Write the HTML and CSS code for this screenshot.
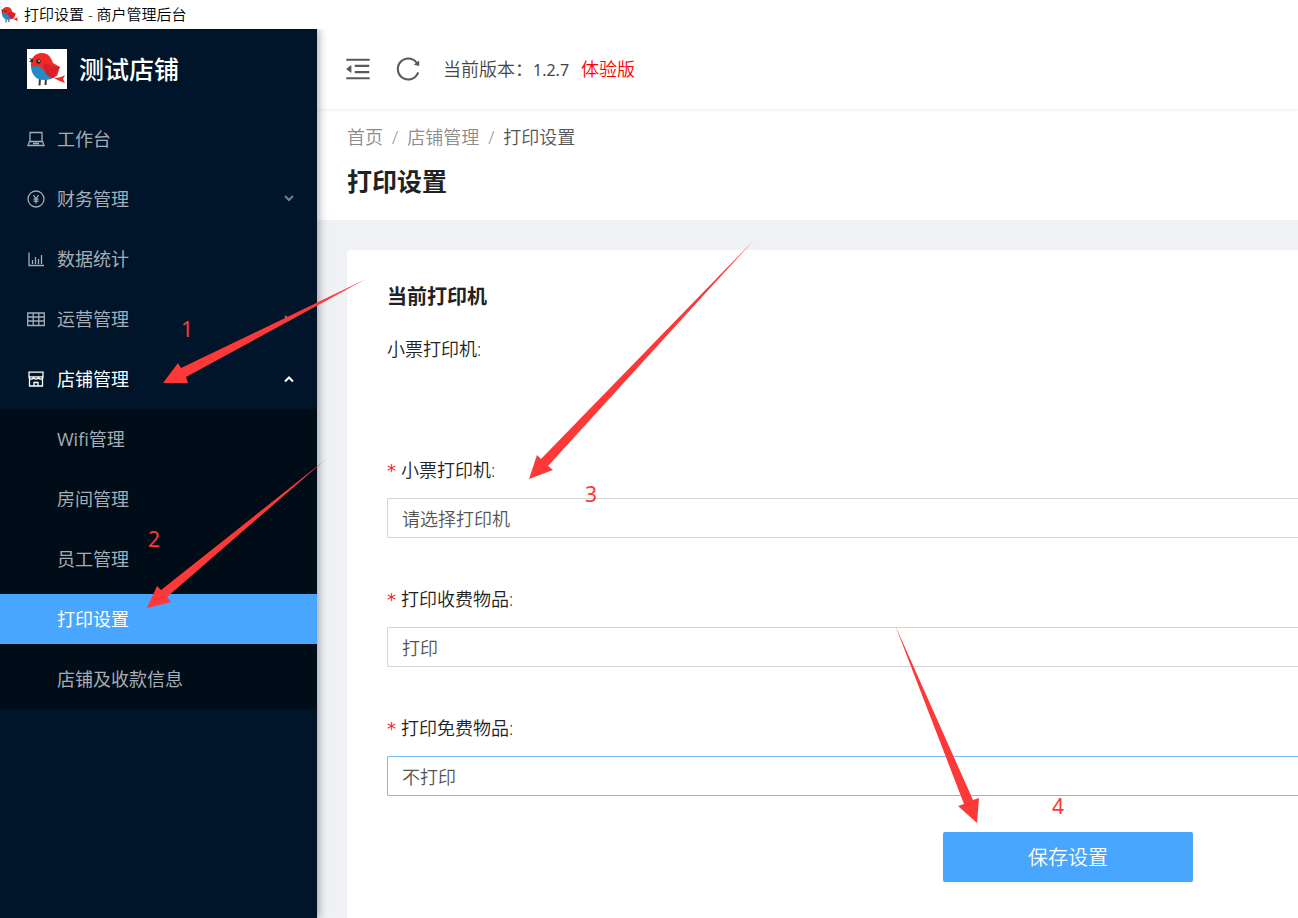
FILE: index.html
```html
<!DOCTYPE html>
<html lang="zh-CN">
<head>
<meta charset="utf-8">
<title>打印设置 - 商户管理后台</title>
<link rel="stylesheet" href="styles.css">
</head>
<body>
<svg class="defs" width="0" height="0" aria-hidden="true">
  <symbol id="bird" viewBox="0 0 40 40">
    <path d="M13 29l-.5 7.500M19 29l-.5 7" stroke="#3a3a3c" stroke-width="2" fill="none"/>
    <path d="M4 17C4 25 9 31 16 31c5 0 10-1 13-4L14 14z" fill="#258bc7"/>
    <path d="M4 18C3 9 8 4 15 4c6 0 9 4 11 10l7 4-3 9-5 1c-4-1-5-5-8-7-4-4-9-5-13-3z" fill="#f02b27"/>
    <path d="M16 15c4-1 6 1 9 2 3 1 5 1 8 1-2 3-4 4-4 7l-2 4c-6 0-11-6-11-14z" fill="#d91f2b"/>
    <path d="M27 29c4 0 8-1 11-3l-2 4 2 4c-4-1-7-3-11-5z" fill="#ed2b2a"/>
    <circle cx="11.500" cy="12.500" r="2.200" fill="#222"/><circle cx="12" cy="12" r="1" fill="#c9b9b5"/>
    <path d="M2 9l4 1v3l-4 0 2-2z" fill="#333"/>
  </symbol>
</svg>

<header class="titlebar">
  <svg class="favicon" aria-hidden="true"><use href="#bird"/></svg>
  <span>打印设置 - 商户管理后台</span>
</header>

<div class="layout">
  <aside class="sider">
    <div class="brand">
      <svg class="logo" aria-hidden="true"><use href="#bird"/></svg>
      <span>测试店铺</span>
    </div>
    <nav>
      <ul class="menu">
        <li><a class="item" href="#desk">
          <svg class="icon" viewBox="0 0 18 18"><path d="M3 11.500V2.500h12v9M1 15.500h16l-1.500-4h-13zM6 13.500h6"/></svg>
          <span>工作台</span></a></li>
        <li><a class="item" href="#finance">
          <svg class="icon" viewBox="0 0 18 18"><circle cx="9" cy="9" r="8"/><path d="M6.500 5L9 9l2.500-4M9 9v4.500M6.500 9.200h5M6.500 11.200h5"/></svg>
          <span>财务管理</span>
          <svg class="chevron" viewBox="0 0 12 12"><path d="M2 3l4 4 4-4"/></svg></a></li>
        <li><a class="item" href="#stats">
          <svg class="icon" viewBox="0 0 18 18"><path d="M2 2.500v13h15M5.500 10v4M8.500 7v7M11.500 9v5M14.500 5v9"/></svg>
          <span>数据统计</span></a></li>
        <li><a class="item" href="#operations">
          <svg class="icon" viewBox="0 0 18 18"><path d="M.7 3h16.600v12.500H.7zM.7 7h16.600M.7 11h16.600M6.200 3v12.500M11.800 3v12.500"/></svg>
          <span>运营管理</span>
          <svg class="chevron" viewBox="0 0 12 12"><path d="M2 3l4 4 4-4"/></svg></a></li>
        <li><a class="item open" href="#shop">
          <svg class="icon" viewBox="0 0 18 18"><path d="M2 2.200h14v4.600H2zM2.500 8v8h13V8M2 6.800c0 3 4.600 3 4.600 0 0 3 4.800 3 4.800 0 0 3 4.600 3 4.600 0M7 16v-3.500h4V16"/></svg>
          <span>店铺管理</span>
          <svg class="chevron" viewBox="0 0 12 12"><path d="M2 8.500l4-4 4 4"/></svg></a>
          <ul class="submenu">
            <li><a class="item" href="#wifi">Wifi管理</a></li>
            <li><a class="item" href="#rooms">房间管理</a></li>
            <li><a class="item" href="#staff">员工管理</a></li>
            <li><a class="item selected" href="#print" aria-current="page">打印设置</a></li>
            <li><a class="item" href="#payment">店铺及收款信息</a></li>
          </ul></li>
      </ul>
    </nav>
  </aside>

  <div class="main">
    <div class="topbar">
      <button class="tool" type="button" aria-label="收起菜单">
        <svg class="fold" viewBox="0 0 1024 1024"><path d="M408 442h480c4.400 0 8-3.600 8-8v-56c0-4.400-3.600-8-8-8H408c-4.400 0-8 3.600-8 8v56c0 4.400 3.600 8 8 8zm-8 204c0 4.400 3.600 8 8 8h480c4.400 0 8-3.600 8-8v-56c0-4.400-3.600-8-8-8H408c-4.400 0-8 3.600-8 8v56zm504-486H120c-4.400 0-8 3.600-8 8v56c0 4.400 3.600 8 8 8h784c4.400 0 8-3.600 8-8v-56c0-4.400-3.600-8-8-8zm0 632H120c-4.400 0-8 3.600-8 8v56c0 4.400 3.600 8 8 8h784c4.400 0 8-3.600 8-8v-56c0-4.400-3.600-8-8-8zM115.400 518.900L271.700 642c5.800 4.600 14.400.5 14.400-6.900V388.900c0-7.400-8.500-11.500-14.400-6.900L115.400 505.100a8.740 8.740 0 0 0 0 13.800z"/></svg>
      </button>
      <button class="tool" type="button" aria-label="刷新">
        <svg class="reload" viewBox="0 0 1024 1024"><path d="M909.100 209.300l-56.400 44.100C775.800 155.100 656.200 92 521.900 92 290 92 102.300 279.500 102 511.500 101.700 743.700 289.800 932 521.900 932c181.300 0 335.800-115 394.600-276.100 1.500-4.200-.7-8.900-4.900-10.300l-56.700-19.500a8 8 0 0 0-10.100 4.800c-1.800 5-3.800 10-5.900 14.900-17.300 41-42.100 77.800-73.700 109.400A344.770 344.770 0 0 1 655.900 829c-42.300 17.900-87.400 27-133.800 27-46.500 0-91.500-9.100-133.800-27A341.500 341.500 0 0 1 279 755.200a342.160 342.160 0 0 1-73.700-109.400c-17.900-42.400-27-87.400-27-133.900s9.100-91.500 27-133.900c17.300-41 42.100-77.800 73.700-109.400 31.600-31.600 68.400-56.400 109.300-73.800 42.300-17.900 87.400-27 133.800-27 46.500 0 91.500 9.100 133.800 27a341.500 341.500 0 0 1 109.300 73.800c9.900 9.900 19.200 20.400 27.800 31.400l-60.200 47a8 8 0 0 0 3 14.100l175.600 43c5 1.200 9.900-2.600 9.900-7.700l.8-180.900c-.1-6.600-7.800-10.300-13-6.200z"/></svg>
      </button>
      <span class="version">当前版本：<span class="number">1.2.7</span></span>
      <span class="trial">体验版</span>
    </div>

    <div class="pagehead">
      <nav class="crumbs" aria-label="面包屑">
        <a href="#home">首页</a><span>/</span><a href="#shop">店铺管理</a><span>/</span><span class="current">打印设置</span>
      </nav>
      <h1>打印设置</h1>
    </div>

    <main class="content">
      <section class="card">
        <h2>当前打印机</h2>
        <p class="printer">小票打印机:</p>
        <form class="form">
          <div class="field">
            <label for="printer">小票打印机:</label>
            <select id="printer"><option>请选择打印机</option></select>
          </div>
          <div class="field">
            <label for="paid">打印收费物品:</label>
            <select id="paid"><option>打印</option><option>不打印</option></select>
          </div>
          <div class="field">
            <label for="free">打印免费物品:</label>
            <select id="free" class="active"><option>不打印</option><option>打印</option></select>
          </div>
          <div class="actions"><button class="save" type="button">保存设置</button></div>
        </form>
      </section>
    </main>
  </div>
</div>

<svg class="notes" width="1298" height="918" viewBox="0 0 1298 918">
  <path d="M163 383l15-20 3 5L366 279 186 377l2 6z"/>
  <path d="M147 608l10-22 4 4L325 460 167 597l4 5z"/>
  <path d="M529 479l8-24 4 4L753 241 548 466l5 4z"/>
  <path d="M977 823l-19-17 6-2L895 625 973 800l6-2z"/>
  <text x="181" y="337">1</text>
  <text x="148" y="547">2</text>
  <text x="585" y="502">3</text>
  <text x="1052" y="814">4</text>
</svg>
</body>
</html>
```

FILE: styles.css
```css
* { box-sizing: border-box; }

body {
  margin: 0;
  min-height: 100vh;
  display: flex;
  flex-direction: column;
  position: relative;
  background: #fff;
  color: #222;
  font: 350 18px/24px "Open Sans", "Noto Sans CJK SC", sans-serif;
}

.defs { position: absolute; }
ul { list-style: none; margin: 0; padding: 0; }
a { color: inherit; text-decoration: none; }
h1, h2, p { margin: 0; }
button, select { font: inherit; }

.titlebar {
  display: flex;
  align-items: center;
  gap: 5px;
  height: 29px;
  padding-bottom: 1px;
  font-size: 15px;
  color: #000;
}
.favicon { width: 19px; height: 19px; }

.layout { display: flex; flex: 1; }

.sider {
  flex: none;
  width: 317px;
  background: #001529;
  color: #a6adb4;
  box-shadow: 2px 0 8px rgba(0, 21, 41, .35);
  clip-path: inset(0 -12px 0 0);
  z-index: 1;
}
.brand {
  display: flex;
  align-items: center;
  gap: 12px;
  height: 80px;
  padding-left: 27px;
  color: #fff;
  font-size: 25px;
  font-weight: 500;
}
.logo { width: 40px; height: 40px; background: #fff; }

.menu li { padding-top: 5px; }
.item {
  display: flex;
  align-items: center;
  gap: 12px;
  height: 50px;
  margin-bottom: 5px;
  padding: 0 22px 0 27px;
  font-weight: 400;
}
.icon, .chevron { fill: none; stroke: currentColor; }
.icon { width: 18px; height: 18px; stroke-width: 1.3; }
.chevron { width: 12px; height: 12px; margin-left: auto; stroke-width: 2; opacity: .7; }
.open { color: #fff; }
.open .chevron { opacity: 1; }
.submenu { background: #000c17; }
.submenu .item { padding-left: 57px; }
.submenu li { padding-bottom: 5px; }
.submenu .item { margin-bottom: 0; }
.submenu .selected { background: #49a6ff; color: #fff; }

.main { flex: 1; min-width: 0; display: flex; flex-direction: column; background: #f0f1f5; }

.topbar {
  display: flex;
  align-items: center;
  height: 80px;
  padding-left: 26px;
  background: #fff;
  box-shadow: 0 1px 4px rgba(0, 21, 41, .08);
  clip-path: inset(0 0 -6px 0);
  position: relative;
  color: #444;
}
.tool { display: flex; padding: 0; border: 0; background: none; margin-right: 21px; }
.tool svg { fill: #595959; }
.fold { width: 30px; height: 30px; }
.reload { width: 28px; height: 28px; }
.number { font-family: "Noto Sans", sans-serif; font-size: 16px; font-weight: 400; }
.trial { margin-left: 12px; color: #f00; }

.pagehead { padding: 16px 30px 21px; background: #fff; }
.crumbs { display: flex; gap: 9px; color: #8c8c8c; }
.crumbs .current { color: #555; }
h1 { margin-top: 14px; font-size: 25px; line-height: 36px; font-weight: 700; }

.content { flex: 1; display: flex; padding: 30px 0 0 30px; }
.card { flex: 1; padding: 31px 0 36px 40px; background: #fff; border-radius: 2px 0 0 0; }
h2 { font-size: 20px; line-height: 32px; font-weight: 700; }
.printer { margin-top: 24px; }
.form { margin-top: 97px; }
.field { display: flex; flex-direction: column; gap: 16px; margin-bottom: 49px; }
.field label::before {
  content: "*";
  display: inline-block;
  width: 14px;
  color: #f5222d;
  font-family: "DejaVu Sans", sans-serif;
  font-size: 18px;
  font-weight: 400;
  line-height: 18px;
}
.field select {
  appearance: none;
  width: 100%;
  height: 40px;
  padding: 2px 14px 0;
  border: 1px solid #d4d4d4;
  border-right: 0;
  border-radius: 2px 0 0 2px;
  background: #fff;
  color: #555;
}
.field select.active { border-color: #73bdf8; }

.actions { display: flex; justify-content: flex-end; margin-top: -13px; padding-right: 105px; }
.save {
  width: 250px;
  height: 50px;
  padding: 2px 0 0;
  border: 0;
  border-radius: 2px;
  background: #49a6ff;
  color: #fff;
  font-size: 20px;
  box-shadow: 0 2px 2px rgba(0, 0, 0, .05);
}

.notes { position: absolute; top: 0; left: 0; z-index: 2; fill: #fd3838; pointer-events: none; }
.notes text { font: 400 21px "Noto Sans", sans-serif; }
```
